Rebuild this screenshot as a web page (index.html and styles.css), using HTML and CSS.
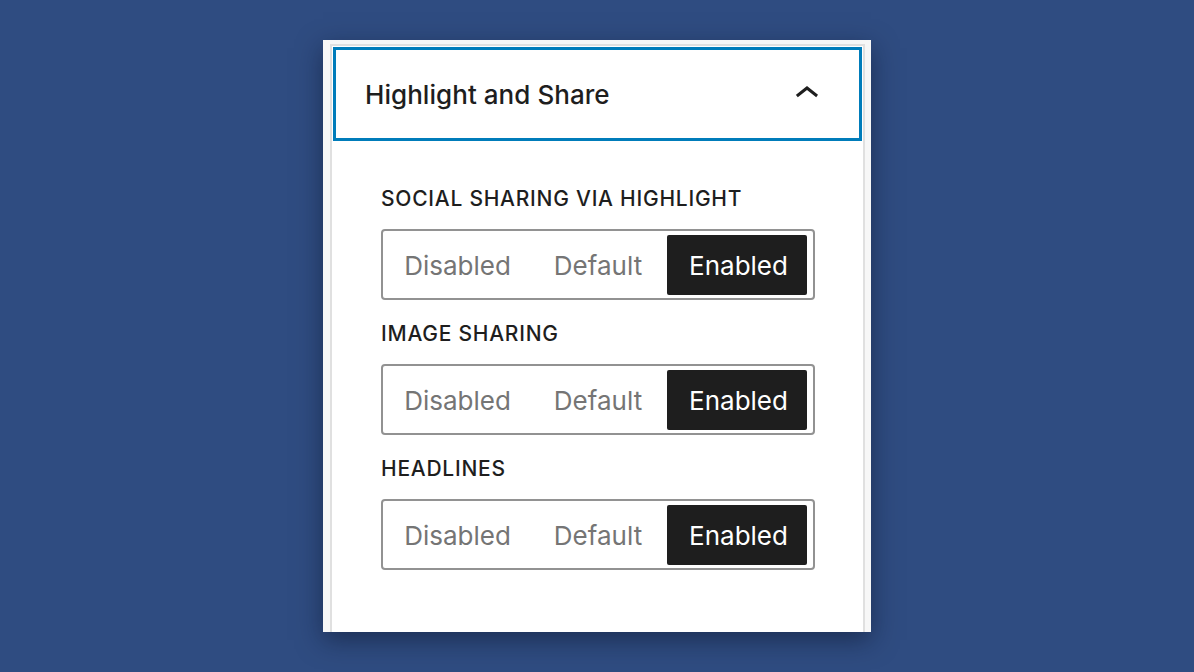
FILE: index.html
```html
<!DOCTYPE html>
<html lang="en">
<head>
<meta charset="utf-8">
<title>Highlight and Share</title>
<link rel="stylesheet" href="styles.css">
</head>
<body>
<div class="card">
  <div class="panel">
    <div class="panel-header">
      <span class="panel-title">Highlight and Share</span>
      <svg class="chevron" width="48" height="48" viewBox="0 0 24 24" aria-hidden="true"><path d="M6.5 12.4L12 8l5.5 4.4-.9 1.2L12 10l-4.6 3.6-1-1.2z"/></svg>
    </div>
    <div class="panel-body">
      <div class="group">
        <div class="label">SOCIAL SHARING VIA HIGHLIGHT</div>
        <div class="segmented">
          <span class="seg seg-a">Disabled</span>
          <span class="seg seg-b">Default</span>
          <span class="seg seg-c active">Enabled</span>
        </div>
      </div>
      <div class="group">
        <div class="label">IMAGE SHARING</div>
        <div class="segmented">
          <span class="seg seg-a">Disabled</span>
          <span class="seg seg-b">Default</span>
          <span class="seg seg-c active">Enabled</span>
        </div>
      </div>
      <div class="group">
        <div class="label">HEADLINES</div>
        <div class="segmented">
          <span class="seg seg-a">Disabled</span>
          <span class="seg seg-b">Default</span>
          <span class="seg seg-c active">Enabled</span>
        </div>
      </div>
    </div>
  </div>
</div>
</body>
</html>
```
FILE: styles.css
```css
html, body {
  margin: 0;
  padding: 0;
}
body {
  background: #2f4c81;
  height: 672px;
  overflow: hidden;
  font-family: Inter, "Noto Sans", sans-serif;
  color: #1e1e1e;
}
.card {
  width: 548px;
  height: 592px;
  margin: 40px auto 0;
  box-sizing: border-box;
  background: #f7f7f7;
  padding: 4px 6px 0 7px;
  box-shadow: 0 8px 24px rgba(10, 18, 40, 0.5);
}
.panel {
  height: 100%;
  box-sizing: border-box;
  background: #fff;
  border: 2px solid #e0e0e0;
  border-bottom: none;
}
.panel-header {
  margin: 1px 1px 0;
  height: 94px;
  box-sizing: border-box;
  border: 3px solid #007cba;
  display: flex;
  align-items: center;
  justify-content: space-between;
  padding: 0 28px 0 29px;
}
.panel-title {
  font-size: 26px;
  font-weight: 500;
  letter-spacing: 0.05px;
}
.chevron {
  fill: #1e1e1e;
  display: block;
}
.panel-body {
  padding: 43px 48px 0 49px;
}
.label {
  font-size: 21px;
  font-weight: 500;
  line-height: 30px;
  letter-spacing: 0.75px;
  margin-bottom: 15px;
}
.segmented {
  display: flex;
  gap: 2px;
  height: 71px;
  box-sizing: border-box;
  border: 2px solid #929292;
  border-radius: 4px;
  padding: 4px 6px 3px 0;
  margin-bottom: 19px;
}
.seg {
  display: flex;
  align-items: center;
  justify-content: center;
  font-size: 26px;
  color: #757575;
  border-radius: 2px;
}
.seg-a { width: 149px; }
.seg-b { width: 128px; }
.seg-c { width: 140px; margin-left: 3px; padding-left: 3px; box-sizing: border-box; }
.seg.active {
  background: #1e1e1e;
  color: #fff;
}
```
